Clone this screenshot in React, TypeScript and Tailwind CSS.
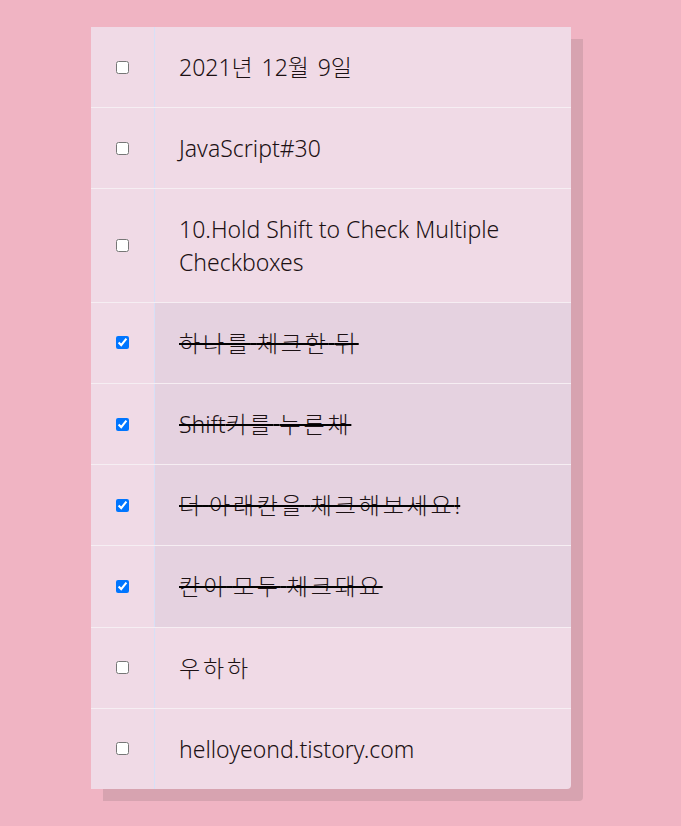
import { useState } from "react"

const initial = [
  { id: 1, text: "2021년 12월 9일", done: false },
  { id: 2, text: "JavaScript#30", done: false },
  { id: 3, text: "10.Hold Shift to Check Multiple Checkboxes", done: false },
  { id: 4, text: "하나를 체크한 뒤", done: true },
  { id: 5, text: "Shift키를 누른채", done: true },
  { id: 6, text: "더 아래칸을 체크해보세요!", done: true },
  { id: 7, text: "칸이 모두 체크돼요", done: true },
  { id: 8, text: "우하하", done: false },
  { id: 9, text: "helloyeond.tistory.com", done: false },
]

// hangul runs get a bit of extra spacing so they sit as wide as the original font
function Label({ text }: { text: string }) {
  return (
    <>
      {text.split(/([가-힣]+)/).map((part, i) =>
        /[가-힣]/.test(part) ? (
          <span key={i} className="tracking-[2.8px]">
            {part}
          </span>
        ) : (
          <span key={i}>{part}</span>
        )
      )}
    </>
  )
}

export default function App() {
  const [items, setItems] = useState(initial)

  const toggle = (id: number) =>
    setItems((prev) => prev.map((it) => (it.id === id ? { ...it, done: !it.done } : it)))

  return (
    <div
      className="min-h-[826px] w-full bg-[#f0b4c3] pt-[27px] pb-10"
      style={{ fontFamily: '"Noto Sans", "Noto Sans CJK KR", sans-serif' }}
    >
      {/* Inbox */}
      <div className="ml-[91px] w-[480px] rounded-br-[4px] bg-[#f0dae6] shadow-[12px_12px_0_#d7a3b0]">
        {items.map((item, i) => (
          <div
            key={item.id}
            className={`flex items-stretch ${i < items.length - 1 ? "border-b border-[#f6eef3]" : ""}`}
          >
            <div className="flex w-[63px] shrink-0 items-center justify-center">
              <input
                type="checkbox"
                checked={item.done}
                onChange={() => toggle(item.id)}
                className="m-0 h-[13px] w-[13px] accent-[#0075ff]"
              />
            </div>
            <p
              className={`flex-1 border-l border-[#d6e0f7] py-6 pl-6 pr-4 text-[23px] leading-[32.2px] font-light text-[#1c1114] ${
                item.done ? "bg-[#e5d2e0] line-through decoration-black decoration-2" : ""
              }`}
            >
              <Label text={item.text} />
            </p>
          </div>
        ))}
      </div>
    </div>
  )
}
